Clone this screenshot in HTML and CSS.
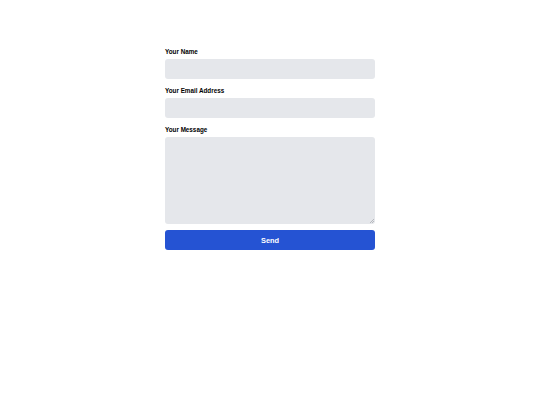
FILE: index.html
```html
<!DOCTYPE html>
<html>
<head>
<meta charset="utf-8">
<link rel="stylesheet" href="styles.css">
</head>
<body>
<form class="form">
  <label class="label" for="name">Your Name</label>
  <input class="field" id="name" type="text">
  <label class="label" for="email">Your Email Address</label>
  <input class="field" id="email" type="email">
  <label class="label" for="msg">Your Message</label>
  <div class="area-wrap">
    <textarea class="field area" id="msg"></textarea>
    <svg class="grip" width="5" height="5" viewBox="0 0 5 5"><path d="M1 5 L5 1 M3 5 L5 3" stroke="#a3a5aa" stroke-width="0.7" fill="none"/></svg>
  </div>
  <button class="send" type="button">Send</button>
</form>
</body>
</html>
```
FILE: styles.css
```css
html, body {
  margin: 0;
  padding: 0;
  background: #ffffff;
  font-family: "Liberation Sans", Arial, sans-serif;
}
.form {
  width: 210px;
  margin: 47px auto 0;
  display: flex;
  flex-direction: column;
}
.label {
  font-size: 6.3px;
  line-height: 8px;
  padding-top: 1px;
  font-weight: bold;
  color: #000;
  margin-bottom: 3px;
}
.field {
  box-sizing: border-box;
  height: 20px;
  width: 100%;
  border: none;
  border-radius: 3px;
  background: #e5e7eb;
  margin: 0 0 7px 0;
  padding: 0 6px;
  font-family: inherit;
  font-size: 8px;
  outline: none;
}
.area-wrap {
  position: relative;
  margin-bottom: 6px;
}
.area {
  height: 87px;
  margin: 0;
  resize: none;
  padding: 4px 6px;
  display: block;
}
.grip {
  position: absolute;
  right: 1px;
  bottom: 1px;
  display: block;
}
.send {
  box-sizing: border-box;
  height: 20px;
  width: 100%;
  border: none;
  border-radius: 3px;
  background: #2553d3;
  color: #ffffff;
  font-family: inherit;
  font-weight: bold;
  font-size: 7.4px;
  padding: 0;
  cursor: pointer;
}
```
